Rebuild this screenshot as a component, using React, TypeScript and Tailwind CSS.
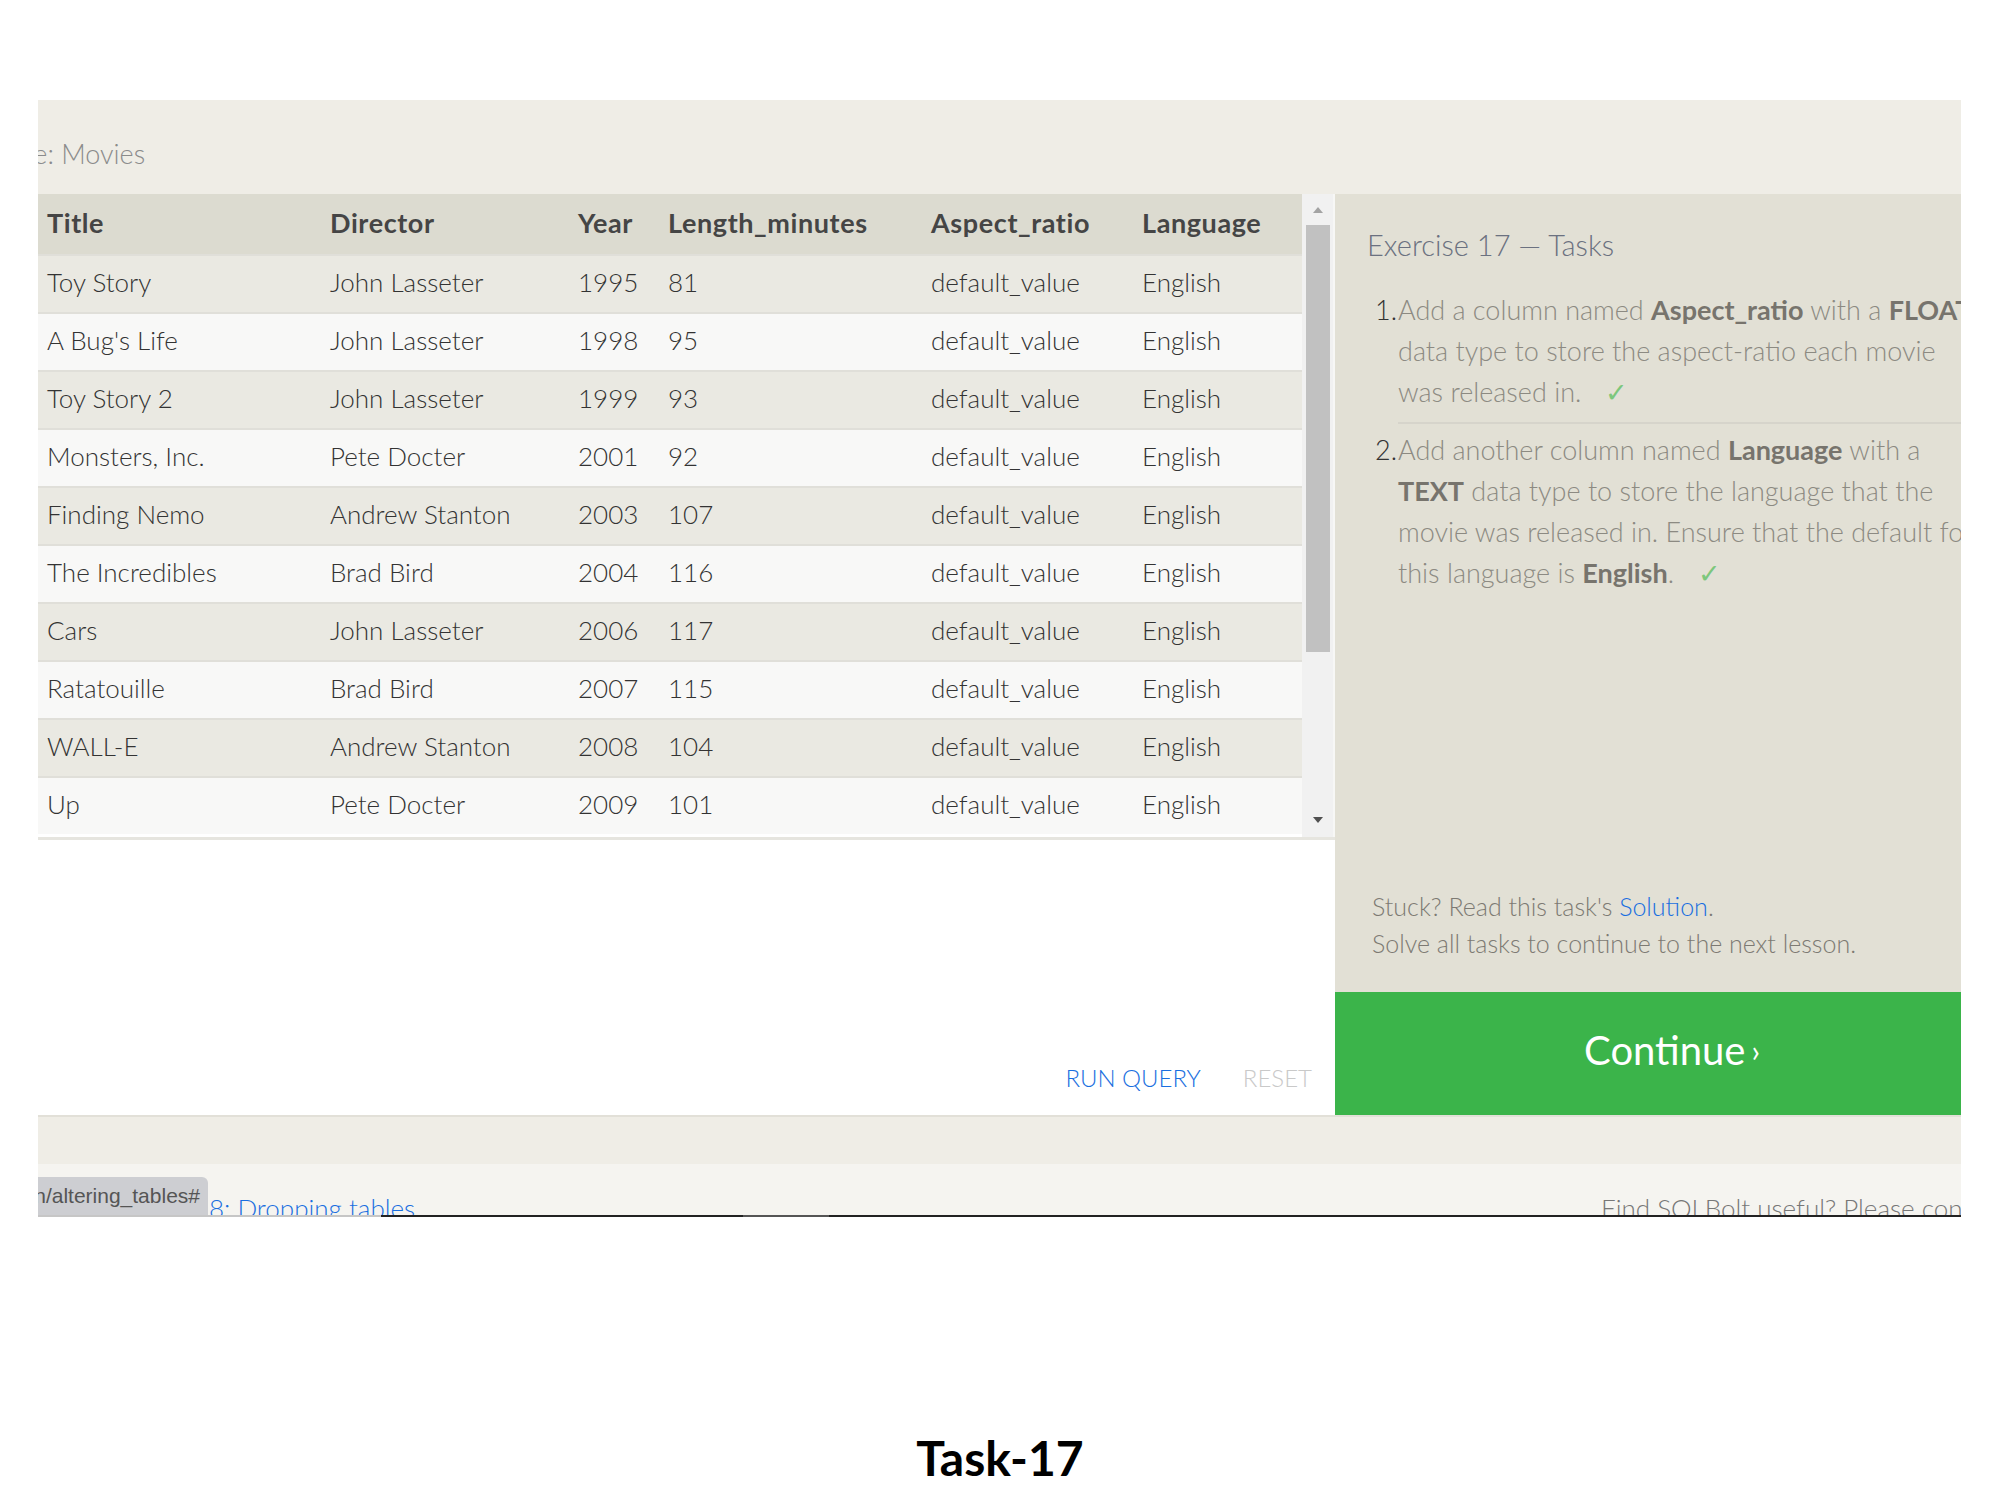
import React from "react";

const movies = [
  ["Toy Story", "John Lasseter", "1995", "81"],
  ["A Bug's Life", "John Lasseter", "1998", "95"],
  ["Toy Story 2", "John Lasseter", "1999", "93"],
  ["Monsters, Inc.", "Pete Docter", "2001", "92"],
  ["Finding Nemo", "Andrew Stanton", "2003", "107"],
  ["The Incredibles", "Brad Bird", "2004", "116"],
  ["Cars", "John Lasseter", "2006", "117"],
  ["Ratatouille", "Brad Bird", "2007", "115"],
  ["WALL-E", "Andrew Stanton", "2008", "104"],
  ["Up", "Pete Docter", "2009", "101"],
];

const cols = "grid grid-cols-[284px_248px_90px_263px_211px_168px]";

function Check() {
  return <span className="ml-[24px] text-[#7cc77c] font-light">✓</span>;
}

export default function App() {
  return (
    <div className="w-[2000px] h-[1500px] bg-white pt-[100px] pl-[38px] font-[Lato,'Open_Sans',sans-serif]">
      <div className="w-[1923px] overflow-hidden">
        {/* table name bar */}
        <div className="h-[94px] bg-[#efede6] flex items-end pb-[24px] overflow-hidden">
          <span className="ml-[-51px] text-[27px] font-light text-[#8b8b8b] leading-[32px] whitespace-nowrap">
            Table: Movies
          </span>
        </div>

        <div className="flex h-[921px]">
          {/* left: results + actions */}
          <div className="w-[1297px] shrink-0 flex flex-col bg-white">
            <div className="h-[646px] flex border-b-[3px] border-[#e6e5df]">
              <div className="w-[1264px] text-[26px] text-[#333]">
                <div className={`${cols} h-[60px] items-center pb-[2px] bg-[#dcdbd0] font-bold text-[27px] tracking-[0.6px] text-[#454545]`}>
                  <div className="pl-[9px]">Title</div>
                  <div className="pl-[8px]">Director</div>
                  <div className="pl-[8px]">Year</div>
                  <div className="pl-[8px]">Length_minutes</div>
                  <div className="pl-[8px]">Aspect_ratio</div>
                  <div className="pl-[8px]">Language</div>
                </div>
                {movies.map((m, i) => (
                  <div
                    key={m[0]}
                    className={`${cols} h-[58px] items-center pb-[3px] border-t-2 border-[#e0dfd9] font-light ${
                      i % 2 === 0 ? "bg-[#eae9e2]" : "bg-[#f8f8f7]"
                    }`}
                  >
                    <div className="pl-[9px]">{m[0]}</div>
                    <div className="pl-[8px]">{m[1]}</div>
                    <div className="pl-[8px]">{m[2]}</div>
                    <div className="pl-[8px]">{m[3]}</div>
                    <div className="pl-[8px]">default_value</div>
                    <div className="pl-[8px]">English</div>
                  </div>
                ))}
              </div>
              {/* scrollbar */}
              <div className="w-[31px] bg-[#f1f1f1] flex flex-col items-center pt-[13px] pb-[14px]">
                <svg width="10" height="6" viewBox="0 0 10 6">
                  <path d="M5 0 L10 6 L0 6 Z" fill="#a3a3a3" />
                </svg>
                <div className="mt-[12px] w-[24px] h-[427px] bg-[#c1c1c1]" />
                <div className="flex-1" />
                <svg width="10" height="6" viewBox="0 0 10 6">
                  <path d="M0 0 L10 0 L5 6 Z" fill="#505050" />
                </svg>
              </div>
              <div className="w-[2px] bg-[#f7f7f5]" />
            </div>
            <div className="flex-1 flex items-end justify-end gap-[42px] pr-[23px] pb-[22px] text-[24px] font-light leading-[30px]">
              <span className="text-[#1a6fe0]">RUN QUERY</span>
              <span className="text-[#c9c9c9]">RESET</span>
            </div>
          </div>

          {/* right: tasks */}
          <div className="w-[674px] shrink-0 bg-[#e2e0d5] flex flex-col">
            <div className="pl-[32px] pt-[33px] text-[29px] font-light text-[#6b7180] leading-[36px]">
              Exercise 17 — Tasks
            </div>
            <div className="mt-[26px] pl-[40px] text-[27px] font-light leading-[41px] text-[#8c8a82] whitespace-nowrap">
              <div className="flex">
                <span className="w-[23px] shrink-0 text-[#333]">1.</span>
                <div className="flex-1 pb-[10px] border-b-2 border-[#d6d4cb]">
                  <div>
                    Add a column named <b className="font-bold text-[#77746d]">Aspect_ratio</b> with a{" "}
                    <b className="font-bold text-[#77746d]">FLOAT</b>
                  </div>
                  <div>data type to store the aspect-ratio each movie</div>
                  <div>
                    was released in.
                    <Check />
                  </div>
                </div>
              </div>
              <div className="flex mt-[5px]">
                <span className="w-[23px] shrink-0 text-[#333]">2.</span>
                <div className="flex-1">
                  <div>
                    Add another column named <b className="font-bold text-[#77746d]">Language</b> with a
                  </div>
                  <div>
                    <b className="font-bold text-[#77746d]">TEXT</b> data type to store the language that the
                  </div>
                  <div>movie was released in. Ensure that the default for</div>
                  <div>
                    this language is <b className="font-bold text-[#77746d]">English</b>.
                    <Check />
                  </div>
                </div>
              </div>
            </div>
            <div className="flex-1" />
            <div className="pl-[37px] pb-[30px] text-[25px] font-light leading-[37px] text-[#7d7a73]">
              <div>
                Stuck? Read this task's <span className="text-[#1a6fe0]">Solution</span>.
              </div>
              <div>Solve all tasks to continue to the next lesson.</div>
            </div>
            <div className="h-[123px] bg-[#3bb44a] flex items-center justify-center text-white text-[40px] leading-none pb-[8px]">
              Continue <span className="ml-[6px] text-[30px]">›</span>
            </div>
          </div>
        </div>

        {/* footer */}
        <div className="h-[49px] bg-[#efede6] border-t-2 border-[#e2e0d8]" />
        <div className="h-[51px] bg-[#f5f4f0] flex overflow-hidden">
          <div className="mt-[13px] w-[170px] h-[38px] shrink-0 bg-[#cdced2] rounded-tr-[6px] overflow-hidden flex justify-end items-center pr-[8px]">
            <span className="font-['Liberation_Sans',sans-serif] text-[21px] text-[#555] whitespace-nowrap">
              n/altering_tables#
            </span>
          </div>
          <span className="mt-[28px] ml-[1px] text-[26px] font-light leading-[32px] text-[#1a6fe0] whitespace-nowrap">
            8: Dropping tables
          </span>
          <span className="mt-[28px] ml-[1186px] text-[26px] font-light leading-[32px] text-[#777] whitespace-nowrap">
            Find SQLBolt useful? Please consider donating
          </span>
        </div>
        <div className="h-[2px] flex">
          <div className="w-[343px] bg-[#c6c6c6]" />
          <div className="w-[362px] bg-[#222]" />
          <div className="w-[86px] bg-[#555]" />
          <div className="flex-1 bg-[#222]" />
        </div>
      </div>

      <div className="mt-[217px] ml-[-38px] text-center text-[48px] font-bold leading-[48px] text-black">
        Task-17
      </div>
    </div>
  );
}
